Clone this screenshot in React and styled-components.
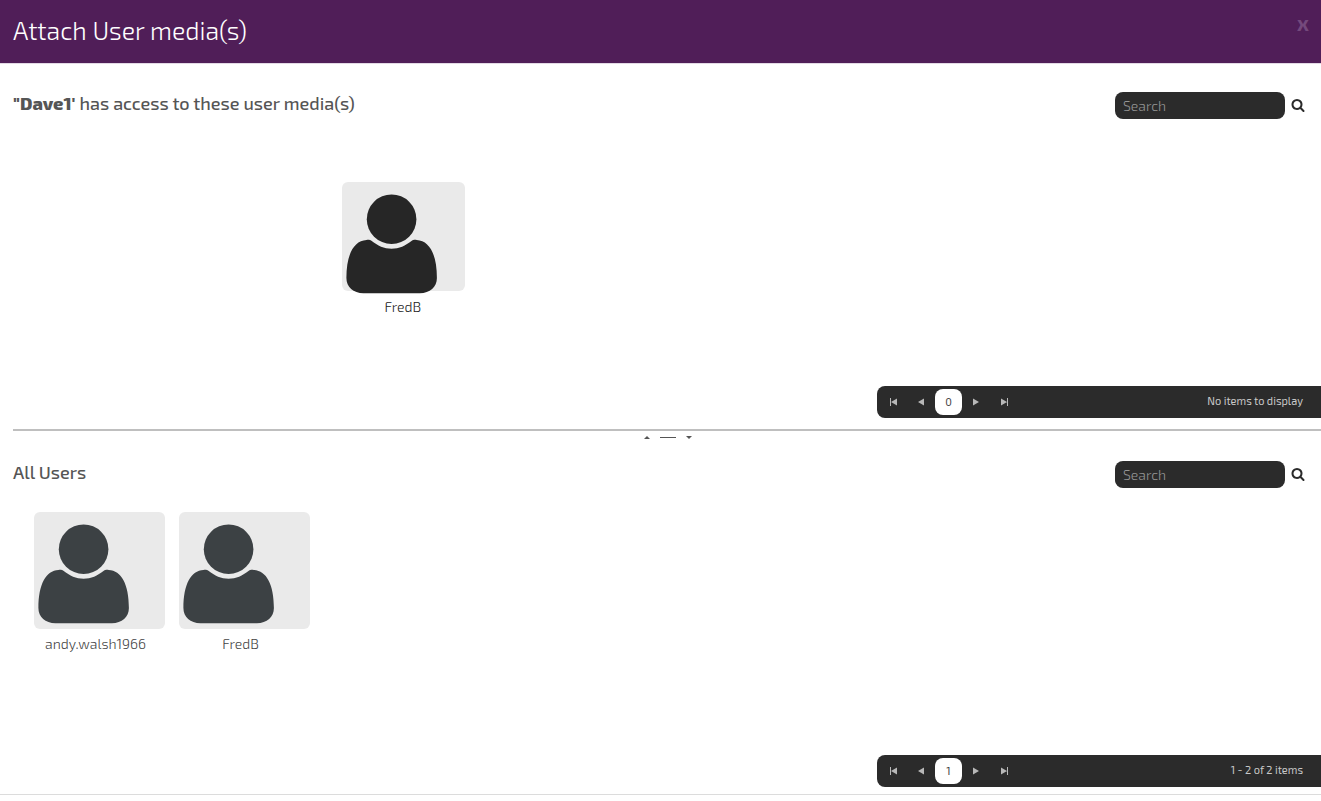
import styled, { createGlobalStyle } from "styled-components";

const GlobalStyle = createGlobalStyle`
  * {
    box-sizing: border-box;
  }

  body {
    margin: 0;
    background: #fff;
    color: #555;
    font-family: "Exo 2", "Open Sans", "Noto Sans", sans-serif;
    font-size: 14px;
  }

  button,
  input {
    font-family: inherit;
  }
`;

const Header = styled.header`
  display: flex;
  justify-content: space-between;
  align-items: flex-start;
  padding: 12px 12px 14px 13px;
  background: #501e58;
  border-bottom: 1px solid #e3d9e5;
`;

const Title = styled.h1`
  margin: 0;
  color: #fff;
  font-size: 25px;
  font-weight: 300;
  line-height: 37px;
`;

const CloseButton = styled.button`
  padding: 0;
  border: 0;
  background: none;
  color: #74497c;
  font-size: 21px;
  font-weight: 700;
  line-height: 22px;
  cursor: pointer;
`;

const Panel = styled.section`
  display: flex;
  flex-direction: column;
  padding-top: ${(props) => props.$top}px;
`;

const PanelHeader = styled.div`
  display: flex;
  justify-content: space-between;
  align-items: flex-start;
  padding: 0 16px 0 13px;
`;

const PanelTitle = styled.h2`
  margin: 0;
  font-size: 18px;
  font-weight: 500;
  line-height: 22px;

  strong {
    font-weight: 800;
  }
`;

const SearchForm = styled.form`
  display: flex;
  align-items: flex-start;
  gap: 6px;
`;

const SearchInput = styled.input`
  width: 170px;
  height: 27px;
  padding: 0 8px;
  border: 0;
  border-radius: 8px;
  background: #2b2b2b;
  color: #ddd;
  font-size: 14px;
  font-weight: 300;

  &::placeholder {
    color: #959595;
    opacity: 1;
  }
`;

const SearchButton = styled.button`
  display: flex;
  padding: 6px 0;
  border: 0;
  background: none;
  color: #2b2b2b;
  cursor: pointer;
`;

const MediaList = styled.ul`
  display: flex;
  gap: 14px;
  min-height: ${(props) => props.$height}px;
  margin: 0;
  padding: ${(props) => props.$padding};
  list-style: none;
`;

const MediaItem = styled.li`
  width: ${(props) => (props.$small ? 123 : 131)}px;
  color: ${(props) => (props.$small ? "#222" : "#444")};
`;

const Thumb = styled.div`
  height: ${(props) => (props.$small ? 109 : 117)}px;
  padding: 12px 4px;
  border-radius: 6px;
  background: #eaeaea;
  color: ${(props) => (props.$small ? "#262626" : "#3c4144")};
`;

const MediaName = styled.div`
  padding: ${(props) => (props.$small ? "6px 2px 0 0" : "5px 8px 0 0")};
  font-size: 14px;
  font-weight: 300;
  line-height: 20px;
  text-align: center;
`;

const PagerBar = styled.nav`
  display: flex;
  align-items: center;
  align-self: flex-end;
  width: 444px;
  height: 32px;
  padding: 0 18px 0 2px;
  border-radius: 8px 0 0 8px;
  background: #2b2b2b;
`;

const PagerButton = styled.button`
  display: flex;
  align-items: center;
  justify-content: center;
  width: 28px;
  height: 26px;
  padding: 0;
  border: 0;
  background: none;
  color: #b8b8b8;
  cursor: pointer;
`;

const PageNumber = styled.span`
  width: 27px;
  border-radius: 8px;
  background: #fff;
  color: #444;
  font-size: 11px;
  line-height: 26px;
  text-align: center;
`;

const PagerInfo = styled.span`
  margin-left: auto;
  padding-bottom: 2px;
  color: #c8c8c8;
  font-size: 11px;
  line-height: 14px;
`;

const Splitter = styled.div`
  display: flex;
  justify-content: center;
  align-items: center;
  gap: 9px;
  margin: 11px 0 0 13px;
  padding: 2px 0 0 2px;
  border-top: 2px solid #bfbfbf;
`;

const SplitterButton = styled.button`
  display: flex;
  padding: 0;
  border: 0;
  background: none;
  color: #555;
  cursor: pointer;
`;

const SplitterHandle = styled.span`
  width: 16px;
  height: 1px;
  background: #555;
`;

const Footer = styled.footer`
  margin-top: 7px;
  border-top: 1px solid #dcdcdc;
`;

const UserIcon = () => (
  <svg width="92" height="100" viewBox="0 0 92 100" fill="currentColor" display="block" aria-hidden="true">
    <circle cx="45.6" cy="25.2" r="24.8" />
    <path d="M20.5 45.900C8 46.500.4 60 .4 84c0 9 7 15.200 17 15.200h56.500c10 0 17-6.200 17-15.200 0-24-7.600-37.500-20.200-38.100-2.200-.2-3.600-.1-4.900.9-6.400 5-12.600 8-20.200 8s-13.800-3-20.200-8c-1.300-1-2.700-1.100-4.900-.9z" />
  </svg>
);

const SearchIcon = () => (
  <svg width="14" height="14" viewBox="0 0 1792 1792" fill="currentColor" aria-hidden="true">
    <path d="M1216 832q0-185-131.500-316.500t-316.500-131.500-316.500 131.500-131.500 316.500 131.500 316.500 316.500 131.500 316.500-131.500 131.500-316.500zm512 832q0 52-38 90t-90 38q-54 0-90-38l-343-342q-179 124-399 124-143 0-273.500-55.500t-225-150-150-225-55.500-273.500 55.500-273.500 150-225 225-150 273.500-55.500 273.500 55.500 225 150 150 225 55.500 273.500q0 220-124 399l343 343q37 37 37 90z" />
  </svg>
);

const ArrowIcon = ({ end, flip }) => (
  <svg
    width="8"
    height="8"
    viewBox="0 0 8 8"
    fill="currentColor"
    aria-hidden="true"
  >
    {flip ? (
      <path d={end ? "M7 0h1v8H7zM1 .5v7L7 4z" : "M1 .5v7L7 4z"} />
    ) : (
      <path d={end ? "M1 0h1v8H1zM8 .5v7L2 4z" : "M7 .5v7L1 4z"} />
    )}
  </svg>
);

const Search = ({ label }) => (
  <SearchForm onSubmit={(e) => e.preventDefault()}>
    <SearchInput type="text" placeholder="Search" aria-label={label} />
    <SearchButton type="submit" aria-label={label}>
      <SearchIcon />
    </SearchButton>
  </SearchForm>
);

const Media = ({ name, small }) => (
  <MediaItem $small={small}>
    <Thumb $small={small}>
      <UserIcon />
    </Thumb>
    <MediaName $small={small}>{name}</MediaName>
  </MediaItem>
);

const Pager = ({ page, info }) => (
  <PagerBar aria-label="Pages">
    <PagerButton type="button" aria-label="First page">
      <ArrowIcon end />
    </PagerButton>
    <PagerButton type="button" aria-label="Previous page">
      <ArrowIcon />
    </PagerButton>
    <PageNumber>{page}</PageNumber>
    <PagerButton type="button" aria-label="Next page">
      <ArrowIcon flip />
    </PagerButton>
    <PagerButton type="button" aria-label="Last page">
      <ArrowIcon end flip />
    </PagerButton>
    <PagerInfo>{info}</PagerInfo>
  </PagerBar>
);

const users = ["andy.walsh1966", "FredB"];

const App = () => {
  return (
    <>
      <GlobalStyle />
      <Header>
        <Title>Attach User media(s)</Title>
        <CloseButton type="button" aria-label="Close">
          x
        </CloseButton>
      </Header>

      <main>
        <Panel $top={28}>
          <PanelHeader>
            <PanelTitle>
              <strong>"Dave1'</strong> has access to these user media(s)
            </PanelTitle>
            <Search label="Search user media" />
          </PanelHeader>
          <MediaList $height={267} $padding="63px 12px 0 calc(25% + 12px)">
            <Media name="FredB" small />
          </MediaList>
          <Pager page="0" info="No items to display" />
        </Panel>

        <Splitter>
          <SplitterButton type="button" aria-label="Collapse top panel">
            <svg width="8" height="8" viewBox="0 0 8 8" fill="currentColor">
              <path d="M1 6h6L4 3z" />
            </svg>
          </SplitterButton>
          <SplitterHandle />
          <SplitterButton type="button" aria-label="Collapse bottom panel">
            <svg width="8" height="8" viewBox="0 0 8 8" fill="currentColor">
              <path d="M1 3h6L4 6z" />
            </svg>
          </SplitterButton>
        </Splitter>

        <Panel $top={20}>
          <PanelHeader>
            <PanelTitle>All Users</PanelTitle>
            <Search label="Search all users" />
          </PanelHeader>
          <MediaList $height={267} $padding="24px 12px 0 34px">
            {users.map((name) => (
              <Media key={name} name={name} />
            ))}
          </MediaList>
          <Pager page="1" info="1 - 2 of 2 items" />
        </Panel>
      </main>
      <Footer />
    </>
  );
};

export default App;
